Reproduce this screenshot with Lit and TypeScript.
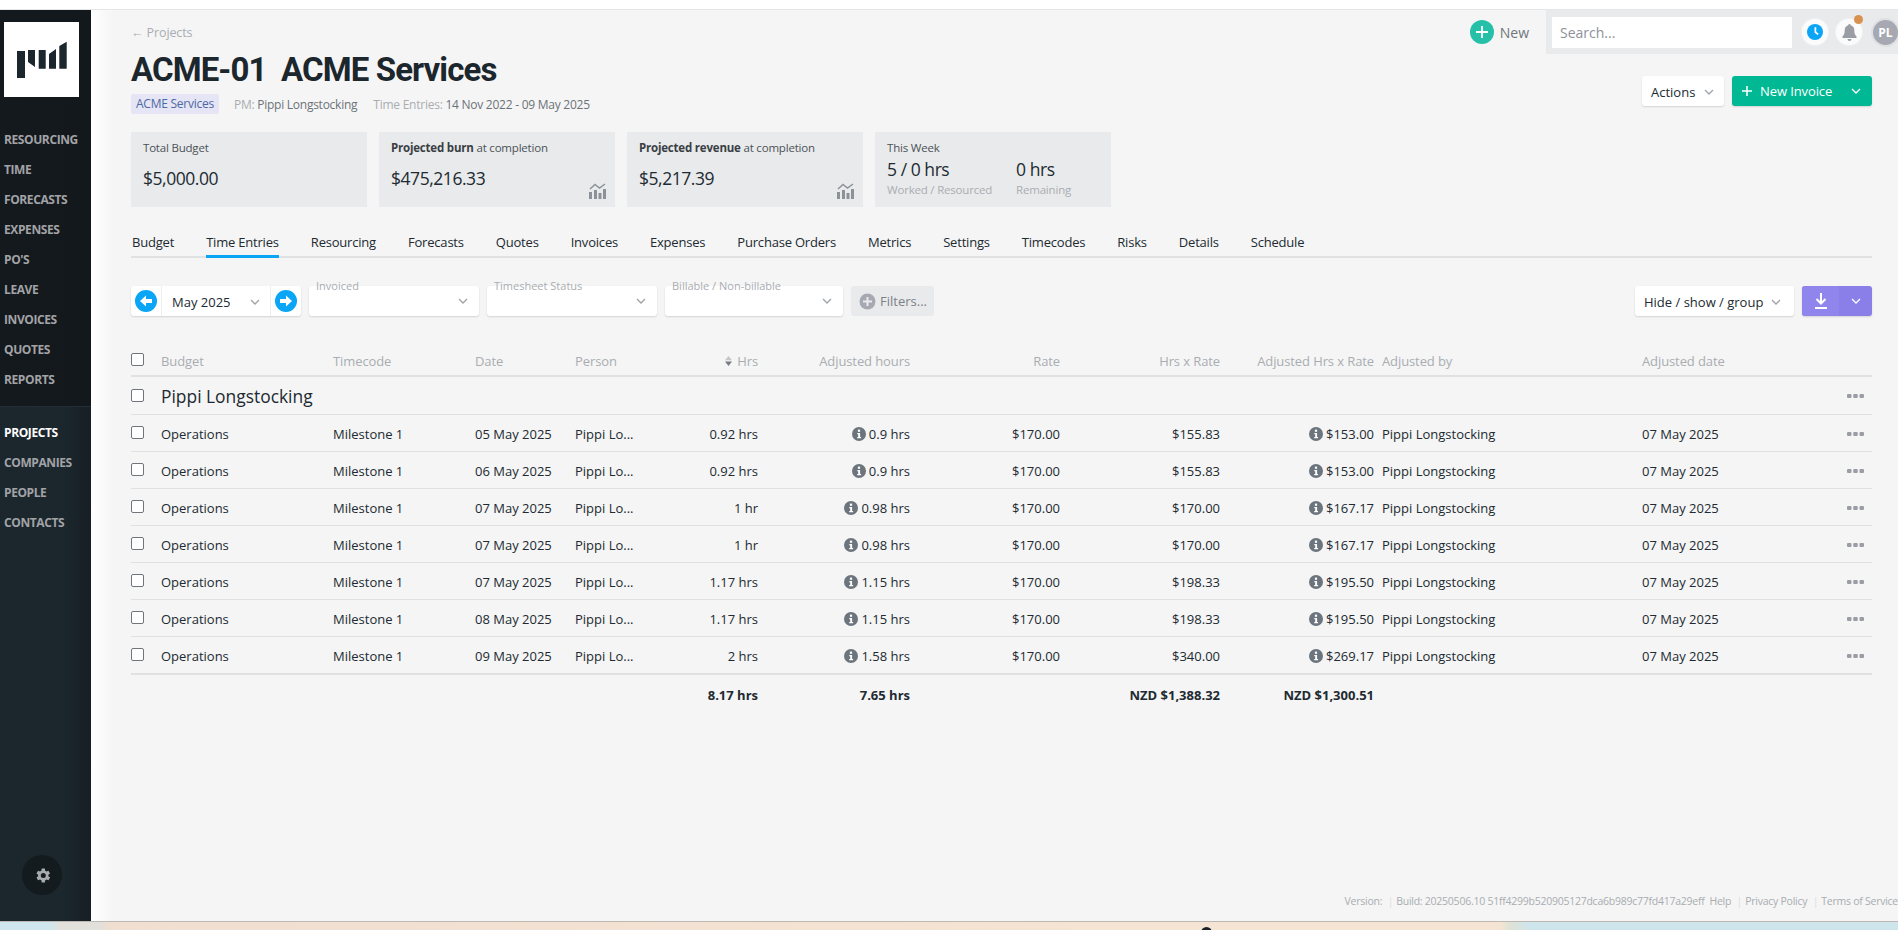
import { LitElement, html, css, svg } from 'lit';
import { customElement } from 'lit/decorators.js';

const NAV_TOP = ['Resourcing', 'Time', 'Forecasts', 'Expenses', "PO's", 'Leave', 'Invoices', 'Quotes', 'Reports'];
const NAV_BOTTOM = ['Projects', 'Companies', 'People', 'Contacts'];
const TABS = ['Budget', 'Time Entries', 'Resourcing', 'Forecasts', 'Quotes', 'Invoices', 'Expenses', 'Purchase Orders', 'Metrics', 'Settings', 'Timecodes', 'Risks', 'Details', 'Schedule'];

const ROWS = [
    ['05 May 2025', '0.92 hrs', '0.9 hrs', '$155.83', '$153.00'],
    ['06 May 2025', '0.92 hrs', '0.9 hrs', '$155.83', '$153.00'],
    ['07 May 2025', '1 hr', '0.98 hrs', '$170.00', '$167.17'],
    ['07 May 2025', '1 hr', '0.98 hrs', '$170.00', '$167.17'],
    ['07 May 2025', '1.17 hrs', '1.15 hrs', '$198.33', '$195.50'],
    ['08 May 2025', '1.17 hrs', '1.15 hrs', '$198.33', '$195.50'],
    ['09 May 2025', '2 hrs', '1.58 hrs', '$340.00', '$269.17'],
];

const chevron = html`<svg class="chev" width="10" height="6" viewBox="0 0 10 6"><path d="M1 1l4 4 4-4" fill="none" stroke="currentColor" stroke-width="1.3"/></svg>`;
const chartIcon = html`<svg class="chart" width="17" height="16" viewBox="0 0 17 16" fill="#8d9299"><rect x="0" y="9" width="3" height="7"/><rect x="5" y="7" width="3" height="9"/><rect x="9.5" y="10" width="3" height="6"/><rect x="14" y="6" width="3" height="10"/><path d="M1 6l5-4.5 4.5 3.5L16 1" fill="none" stroke="#8d9299" stroke-width="1.5"/></svg>`;
const infoIcon = html`<svg class="info" width="14" height="14" viewBox="0 0 14 14"><circle cx="7" cy="7" r="7" fill="#6c757d"/><rect x="5.9" y="2.6" width="2.2" height="2.2" fill="#fff"/><path d="M5.3 6h2.8v4h1v1.3H5.2V10h1V7.3H5.3z" fill="#fff"/></svg>`;
const dots = html`<svg class="dots" width="17" height="4" viewBox="0 0 17 4" fill="#9a9ea4"><rect width="4.500" height="4" rx="1"/><rect x="6.250" width="4.500" height="4" rx="1"/><rect x="12.500" width="4.500" height="4" rx="1"/></svg>`;
const arrow = (left: boolean) => svg`<svg width="22" height="22" viewBox="0 0 22 22"><circle cx="11" cy="11" r="11" fill="#0aa5f5"/><path d="${left ? 'M5 11l6-5.5V9h6v4h-6v3.5z' : 'M17 11l-6-5.5V9H5v4h6v3.5z'}" fill="#fff"/></svg>`;

@customElement('app-root')
export class AppRoot extends LitElement {
    static override styles = css`
        :host {
            display: block;
            position: relative;
            width: 1898px;
            height: 930px;
            overflow: hidden;
            background: #fff;
            font-family: 'Open Sans', 'Noto Sans', sans-serif;
            font-size: 13px;
            color: #212a31;
        }
        * {
            box-sizing: border-box;
        }
        .shell {
            display: flex;
            height: 912px;
            margin-top: 9px;
            border-top: 1px solid #e4e6e8;
        }
        .strip {
            height: 9px;
            border-top: 1px solid #bdb8b2;
            background: linear-gradient(90deg, #d0e6ee 0, #d0e6ee 50px, #e2e0da 60px, #e2e0da 100px, #f0dfd0 110px, #f5e4d4 1100px, #f5e4d4 1500px, #dfe2d4 1510px, #cfe5ec 1528px, #cfe5ec 100%);
        }
        .cursor {
            position: absolute;
            left: 1201px;
            top: 927px;
            width: 11px;
            height: 11px;
            border-radius: 50%;
            background: #1b2025;
        }
        .side {
            width: 91px;
            flex: none;
            display: flex;
            flex-direction: column;
            background: #1b262d;
            color: #a2a3a7;
            font-weight: 700;
            font-size: 12px;
            letter-spacing: -0.4px;
            text-transform: uppercase;
        }
        .side-top {
            background: linear-gradient(90deg, #14191d, #13181c);
            padding: 12px 0 0 4px;
            height: 396px;
        }
        .logo {
            width: 75px;
            height: 75px;
            background: #fff;
            margin-bottom: 28px;
        }
        .logo svg {
            display: block;
        }
        .nav-item {
            height: 30px;
            line-height: 30px;
            white-space: nowrap;
        }
        .side-bottom {
            flex: 1;
            display: flex;
            flex-direction: column;
            padding: 11px 0 26px 4px;
            border-top: 1px solid #232e36;
            background: linear-gradient(90deg, #1b262d 70%, #171f24);
        }
        .nav-item.on {
            color: #fff;
        }
        .gear {
            margin: auto 0 0 18px;
            width: 40px;
            height: 40px;
            border-radius: 50%;
            background: #141b1f;
            display: flex;
            align-items: center;
            justify-content: center;
        }
        .main {
            flex: 1;
            position: relative;
            display: flex;
            flex-direction: column;
            background: linear-gradient(90deg, #fff 0, #f5f5f5 22px);
            padding: 0 26px 0 40px;
            min-width: 0;
        }
        .topbar {
            position: absolute;
            top: 0;
            right: 0;
            display: flex;
            align-items: center;
        }
        .new {
            display: flex;
            align-items: center;
            gap: 6px;
            color: #6f767c;
            font-size: 14px;
            margin-right: 17px;
        }
        .new-plus {
            width: 24px;
            height: 24px;
            border-radius: 50%;
            background: #26c0a8;
            display: flex;
            align-items: center;
            justify-content: center;
        }
        .tray {
            width: 352px;
            height: 44px;
            background: #e9eaec;
            display: flex;
            align-items: center;
            padding-left: 6px;
            gap: 8px;
        }
        .search {
            width: 240px;
            flex: none;
            height: 31px;
            background: #fff;
            color: #8d9298;
            font-size: 14px;
            line-height: 31px;
            padding-left: 8px;
            margin-right: 2px;
        }
        .round {
            width: 26px;
            height: 26px;
            flex: none;
            border-radius: 50%;
            background: #fbfbfc;
            box-shadow: 0 0 0 1px #f0f1f2;
            display: flex;
            align-items: center;
            justify-content: center;
            position: relative;
        }
        .badge {
            position: absolute;
            top: -4px;
            right: -1px;
            width: 9px;
            height: 9px;
            border-radius: 50%;
            background: #d9914f;
        }
        .avatar {
            width: 25px;
            height: 25px;
            flex: none;
            border-radius: 50%;
            background: #a6a9b1;
            color: #fff;
            font-size: 12px;
            font-weight: 700;
            line-height: 25px;
            text-align: center;
            box-shadow: 0 0 0 2px #dfe0e3;
            margin-left: 3px;
        }
        .crumb {
            margin-top: 14px;
            height: 17px;
            line-height: 17px;
            font-size: 12.5px;
            letter-spacing: -0.1px;
            color: #a9adb2;
        }
        h1 {
            margin: 9px 0 0;
            font-family: Roboto, sans-serif;
            font-size: 33px;
            letter-spacing: -0.9px;
            line-height: 40px;
            font-weight: 700;
            color: #1b262d;
            white-space: pre;
        }
        .meta {
            display: flex;
            align-items: center;
            margin-top: 4px;
            height: 20px;
            font-size: 12px;
            letter-spacing: -0.25px;
            color: #a9adb2;
        }
        .meta b {
            font-weight: 400;
            color: #6c7378;
        }
        .tag {
            background: #e5e5f5;
            color: #4d6aa3;
            height: 20px;
            line-height: 20px;
            padding: 0 5px;
            border-radius: 2px;
            margin-right: 15px;
        }
        .meta .pm {
            margin-right: 16px;
        }
        .head-actions {
            position: absolute;
            top: 66px;
            right: 26px;
            display: flex;
            gap: 8px;
        }
        .btn {
            height: 30px;
            display: flex;
            align-items: center;
            border-radius: 3px;
            background: #fff;
            box-shadow: 0 1px 2px rgba(0, 0, 0, 0.14);
            font-size: 13px;
            color: #212a31;
        }
        .chev {
            color: #9ea3a8;
            flex: none;
        }
        .actions {
            width: 82px;
            padding: 2px 0 0 9px;
            gap: 9px;
        }
        .invoice {
            width: 140px;
            background: #00b894;
            color: #fff;
        }
        .invoice .label {
            width: 108px;
            display: flex;
            align-items: center;
            gap: 8px;
            padding-left: 10px;
            letter-spacing: -0.1px;
            white-space: nowrap;
        }
        .invoice .chev {
            color: #fff;
            margin-left: 11px;
        }
        .cards {
            display: flex;
            gap: 12px;
            margin-top: 18px;
        }
        .card {
            position: relative;
            width: 236px;
            height: 75px;
            background: #e9eaec;
            padding: 8px 12px;
            font-size: 11.5px;
            letter-spacing: -0.2px;
            color: #4b5257;
        }
        .card b {
            color: #3a3f44;
        }
        .value {
            margin-top: 11px;
            font-size: 17.5px;
            letter-spacing: -0.45px;
            line-height: 24px;
            color: #212a31;
        }
        .chart {
            position: absolute;
            right: 9px;
            bottom: 8px;
        }
        .week {
            display: flex;
            gap: 24px;
            margin-top: 3px;
        }
        .week .value {
            margin: 0;
            line-height: 22px;
        }
        .week small {
            display: block;
            margin-top: 2px;
            font-size: 11.5px;
            color: #a9adb2;
        }
        .tabs {
            display: flex;
            gap: 32px;
            margin-top: 18px;
            height: 33px;
            padding-left: 1px;
            border-bottom: 2px solid #e0e1e3;
            letter-spacing: -0.2px;
        }
        .tab {
            height: 33px;
            line-height: 24px;
            padding-top: 5px;
            white-space: nowrap;
        }
        .tab.on {
            border-bottom: 3px solid #0aa5f5;
        }
        .filters {
            display: flex;
            gap: 8px;
            margin-top: 28px;
            height: 30px;
        }
        .month {
            width: 170px;
            padding: 0;
        }
        .month .a {
            width: 30px;
            height: 30px;
            display: flex;
            align-items: center;
            justify-content: center;
        }
        .month .m {
            flex: 1;
            height: 30px;
            border: solid #eceded;
            border-width: 0 1px;
            display: flex;
            align-items: center;
            justify-content: space-between;
            padding: 2px 10px 0;
        }
        .select {
            position: relative;
            width: 170px;
            justify-content: flex-end;
            padding-right: 11px;
        }
        .select.wide {
            width: 178px;
        }
        .float {
            position: absolute;
            left: 7px;
            top: -8px;
            font-size: 11px;
            color: #a9adb2;
            white-space: nowrap;
        }
        .more {
            width: 83px;
            background: #e9eaec;
            box-shadow: none;
            color: #7b8187;
            padding-left: 8px;
            gap: 4px;
        }
        .spacer {
            flex: 1;
        }
        .hide {
            width: 159px;
            padding: 2px 0 0 9px;
            gap: 8px;
            white-space: nowrap;
        }
        .dl {
            width: 70px;
            background: #8a7fe8;
        }
        .dl .l {
            width: 37px;
            height: 30px;
            display: flex;
            align-items: center;
            justify-content: center;
            border-radius: 3px 0 0 3px;
            background: #8f85ec;
        }
        .dl .chev {
            color: #fff;
            margin-left: 12px;
        }
        .row {
            display: grid;
            grid-template-columns: 30px 172px 142px 100px 93px 90px 152px 150px 160px 154px 268px 205px 25px;
            align-items: center;
            white-space: nowrap;
        }
        .r {
            text-align: right;
        }
        .thead {
            height: 32px;
            margin-top: 29px;
            padding-top: 1px;
            border-bottom: 2px solid #e0e1e3;
            letter-spacing: -0.1px;
            color: #a9adb2;
        }
        .group {
            height: 38px;
            padding-top: 1px;
            border-bottom: 1px solid #dfe0e2;
        }
        .group .name {
            grid-column: 2 / 12;
            font-size: 17.4px;
        }
        .data {
            height: 37px;
            padding-top: 1px;
            border-bottom: 1px solid #dfe0e2;
        }
        .data.last {
            height: 38px;
            border-bottom: 2px solid #e0e1e3;
        }
        .pad {
            padding-left: 8px;
        }
        .info {
            vertical-align: -2px;
            margin-right: 3px;
        }
        .box {
            width: 13px;
            height: 13px;
            border: 1px solid #70757a;
            border-radius: 2px;
            background: #fff;
            margin-top: -3px;
        }
        .group .box {
            margin-top: -1px;
        }
        .sort {
            margin-right: 5px;
        }
        .total {
            height: 38px;
            padding-top: 1px;
            font-weight: 700;
        }
        .foot {
            margin: auto -26px 13px 0;
            text-align: right;
            font-size: 10.5px;
            letter-spacing: -0.25px;
            line-height: 14px;
            color: #a9adb2;
            white-space: pre;
        }
        .foot i {
            font-style: normal;
            color: #dcdde0;
            margin: 0 3px;
        }
    `;

    override render() {
        return html`
            <div class="shell">
                <aside class="side">
                    <div class="side-top">
                        <div class="logo">
                            <svg width="75" height="75" viewBox="4 22 75 75" fill="#1b262d">
                                <path d="M17 51h8v27h-8zM28 50h7v17l-7-5zM38.700 50h7v18.700h-7zM49 54l7-5v19.700h-7zM59.300 46l7.400-4.300v27h-7.400z"/>
                            </svg>
                        </div>
                        ${NAV_TOP.map((n) => html`<div class="nav-item">${n}</div>`)}
                    </div>
                    <div class="side-bottom">
                        ${NAV_BOTTOM.map((n, i) => html`<div class="nav-item ${i === 0 ? 'on' : ''}">${n}</div>`)}
                        <div class="gear">
                            <svg width="19" height="19" viewBox="0 0 24 24"><path fill="#a8abb0" d="M19.4 13a7.5 7.5 0 0 0 0-2l2.1-1.6-2-3.5-2.5 1a7.5 7.5 0 0 0-1.7-1L15 3.2h-4l-.4 2.7a7.5 7.5 0 0 0-1.7 1l-2.5-1-2 3.500L6.500 11a7.500 7.500 0 0 0 0 2l-2.100 1.600 2 3.500 2.500-1a7.500 7.500 0 0 0 1.700 1l.4 2.700h4l.4-2.700a7.500 7.500 0 0 0 1.700-1l2.500 1 2-3.500zM13 15.200a3.200 3.200 0 1 1 0-6.400 3.200 3.200 0 0 1 0 6.400z"/></svg>
                        </div>
                    </div>
                </aside>
                <main class="main">
                    ${this.renderTop()}
                    <div class="crumb">← Projects</div>
                    <h1>ACME-01  ACME Services</h1>
                    <div class="meta">
                        <span class="tag">ACME Services</span>
                        <span class="pm">PM: <b>Pippi Longstocking</b></span>
                        <span>Time Entries: <b>14 Nov 2022 - 09 May 2025</b></span>
                    </div>
                    <div class="head-actions">
                        <div class="btn actions">Actions ${chevron}</div>
                        <div class="btn invoice">
                            <span class="label"><svg width="10" height="10" viewBox="0 0 10 10"><path d="M5 0v10M0 5h10" stroke="#fff" stroke-width="1.500"/></svg>New Invoice</span>
                            ${chevron}
                        </div>
                    </div>
                    ${this.renderCards()}
                    <div class="tabs">
                        ${TABS.map((t) => html`<div class="tab ${t === 'Time Entries' ? 'on' : ''}">${t}</div>`)}
                    </div>
                    ${this.renderFilters()}
                    ${this.renderTable()}
                    <div class="foot">Version: <i>|</i>Build: 20250506.10 51ff4299b520905127dca6b989c77fd417a29eff  Help <i>|</i>Privacy Policy <i>|</i>Terms of Service</div>
                </main>
            </div>
            <div class="strip"></div>
            <div class="cursor"></div>
        `;
    }

    private renderTop() {
        return html`
            <div class="topbar">
                <div class="new">
                    <span class="new-plus"><svg width="14" height="14" viewBox="0 0 14 14"><path d="M7 1v12M1 7h12" stroke="#fff" stroke-width="1.800"/></svg></span>
                    New
                </div>
                <div class="tray">
                    <div class="search">Search...</div>
                    <div class="round">
                        <svg width="16" height="16" viewBox="0 0 17 17"><circle cx="8.500" cy="8.500" r="8.500" fill="#0aa5f5"/><path d="M8 3.500h1.800v4.800l2.600 2-1 1.300L8 9.200z" fill="#fff"/></svg>
                    </div>
                    <div class="round">
                        <svg width="15" height="17" viewBox="0 0 15 17"><path d="M7.500 0a1.200 1.200 0 0 1 1.200 1.300C11 1.900 12.300 3.800 12.300 6c0 4 1 5 2.200 6.500V14H.5v-1.500C1.700 11 2.700 10 2.700 6c0-2.200 1.300-4.100 3.600-4.700A1.200 1.200 0 0 1 7.500 0zM5.500 15h4a2 2 0 0 1-4 0z" fill="#9a9da3"/></svg>
                        <span class="badge"></span>
                    </div>
                    <div class="avatar">PL</div>
                </div>
            </div>
        `;
    }

    private renderCards() {
        return html`
            <div class="cards">
                <div class="card">Total Budget<div class="value">$5,000.00</div></div>
                <div class="card"><b>Projected burn</b> at completion<div class="value">$475,216.33</div>${chartIcon}</div>
                <div class="card"><b>Projected revenue</b> at completion<div class="value">$5,217.39</div>${chartIcon}</div>
                <div class="card">This Week
                    <div class="week">
                        <div><div class="value">5 / 0 hrs</div><small>Worked / Resourced</small></div>
                        <div><div class="value">0 hrs</div><small>Remaining</small></div>
                    </div>
                </div>
            </div>
        `;
    }

    private renderFilters() {
        return html`
            <div class="filters">
                <div class="btn month">
                    <span class="a">${arrow(true)}</span>
                    <span class="m">May 2025 ${chevron}</span>
                    <span class="a">${arrow(false)}</span>
                </div>
                <div class="btn select"><span class="float">Invoiced</span>${chevron}</div>
                <div class="btn select"><span class="float">Timesheet Status</span>${chevron}</div>
                <div class="btn select wide"><span class="float">Billable / Non-billable</span>${chevron}</div>
                <div class="btn more">
                    <svg width="17" height="17" viewBox="0 0 17 17"><circle cx="8.500" cy="8.500" r="8" fill="#a6a9b1"/><path d="M8.500 4v9M4 8.500h9" stroke="#e9eaec" stroke-width="2"/></svg>
                    Filters...
                </div>
                <div class="spacer"></div>
                <div class="btn hide">Hide / show / group ${chevron}</div>
                <div class="btn dl">
                    <span class="l"><svg width="14" height="16" viewBox="0 0 14 16" fill="none" stroke="#fff" stroke-width="2"><path d="M7 0v10M2.500 6L7 10.500 11.500 6M1 15h12"/></svg></span>
                    ${chevron}
                </div>
            </div>
        `;
    }

    private renderTable() {
        return html`
            <div class="row thead">
                <span class="box"></span>
                <span>Budget</span>
                <span>Timecode</span>
                <span>Date</span>
                <span>Person</span>
                <span class="r"><svg class="sort" width="7" height="10" viewBox="0 0 7 10"><path d="M3.500 0L7 4.300H0z" fill="#c4c6ca"/><path d="M3.500 10L0 5.500h7z" fill="#777c82"/></svg>Hrs</span>
                <span class="r">Adjusted hours</span>
                <span class="r">Rate</span>
                <span class="r">Hrs x Rate</span>
                <span class="r">Adjusted Hrs x Rate</span>
                <span class="pad">Adjusted by</span>
                <span>Adjusted date</span>
                <span></span>
            </div>
            <div class="row group">
                <span class="box"></span>
                <span class="name">Pippi Longstocking</span>
                <span></span>
                ${dots}
            </div>
            ${ROWS.map(
                (r, i) => html`
                    <div class="row data ${i === ROWS.length - 1 ? 'last' : ''}">
                        <span class="box"></span>
                        <span>Operations</span>
                        <span>Milestone 1</span>
                        <span>${r[0]}</span>
                        <span>Pippi Lo...</span>
                        <span class="r">${r[1]}</span>
                        <span class="r">${infoIcon}${r[2]}</span>
                        <span class="r">$170.00</span>
                        <span class="r">${r[3]}</span>
                        <span class="r">${infoIcon}${r[4]}</span>
                        <span class="pad">Pippi Longstocking</span>
                        <span>07 May 2025</span>
                        ${dots}
                    </div>
                `
            )}
            <div class="row total">
                <span></span><span></span><span></span><span></span><span></span>
                <span class="r">8.17 hrs</span>
                <span class="r">7.65 hrs</span>
                <span></span>
                <span class="r">NZD $1,388.32</span>
                <span class="r">NZD $1,300.51</span>
            </div>
        `;
    }
}
